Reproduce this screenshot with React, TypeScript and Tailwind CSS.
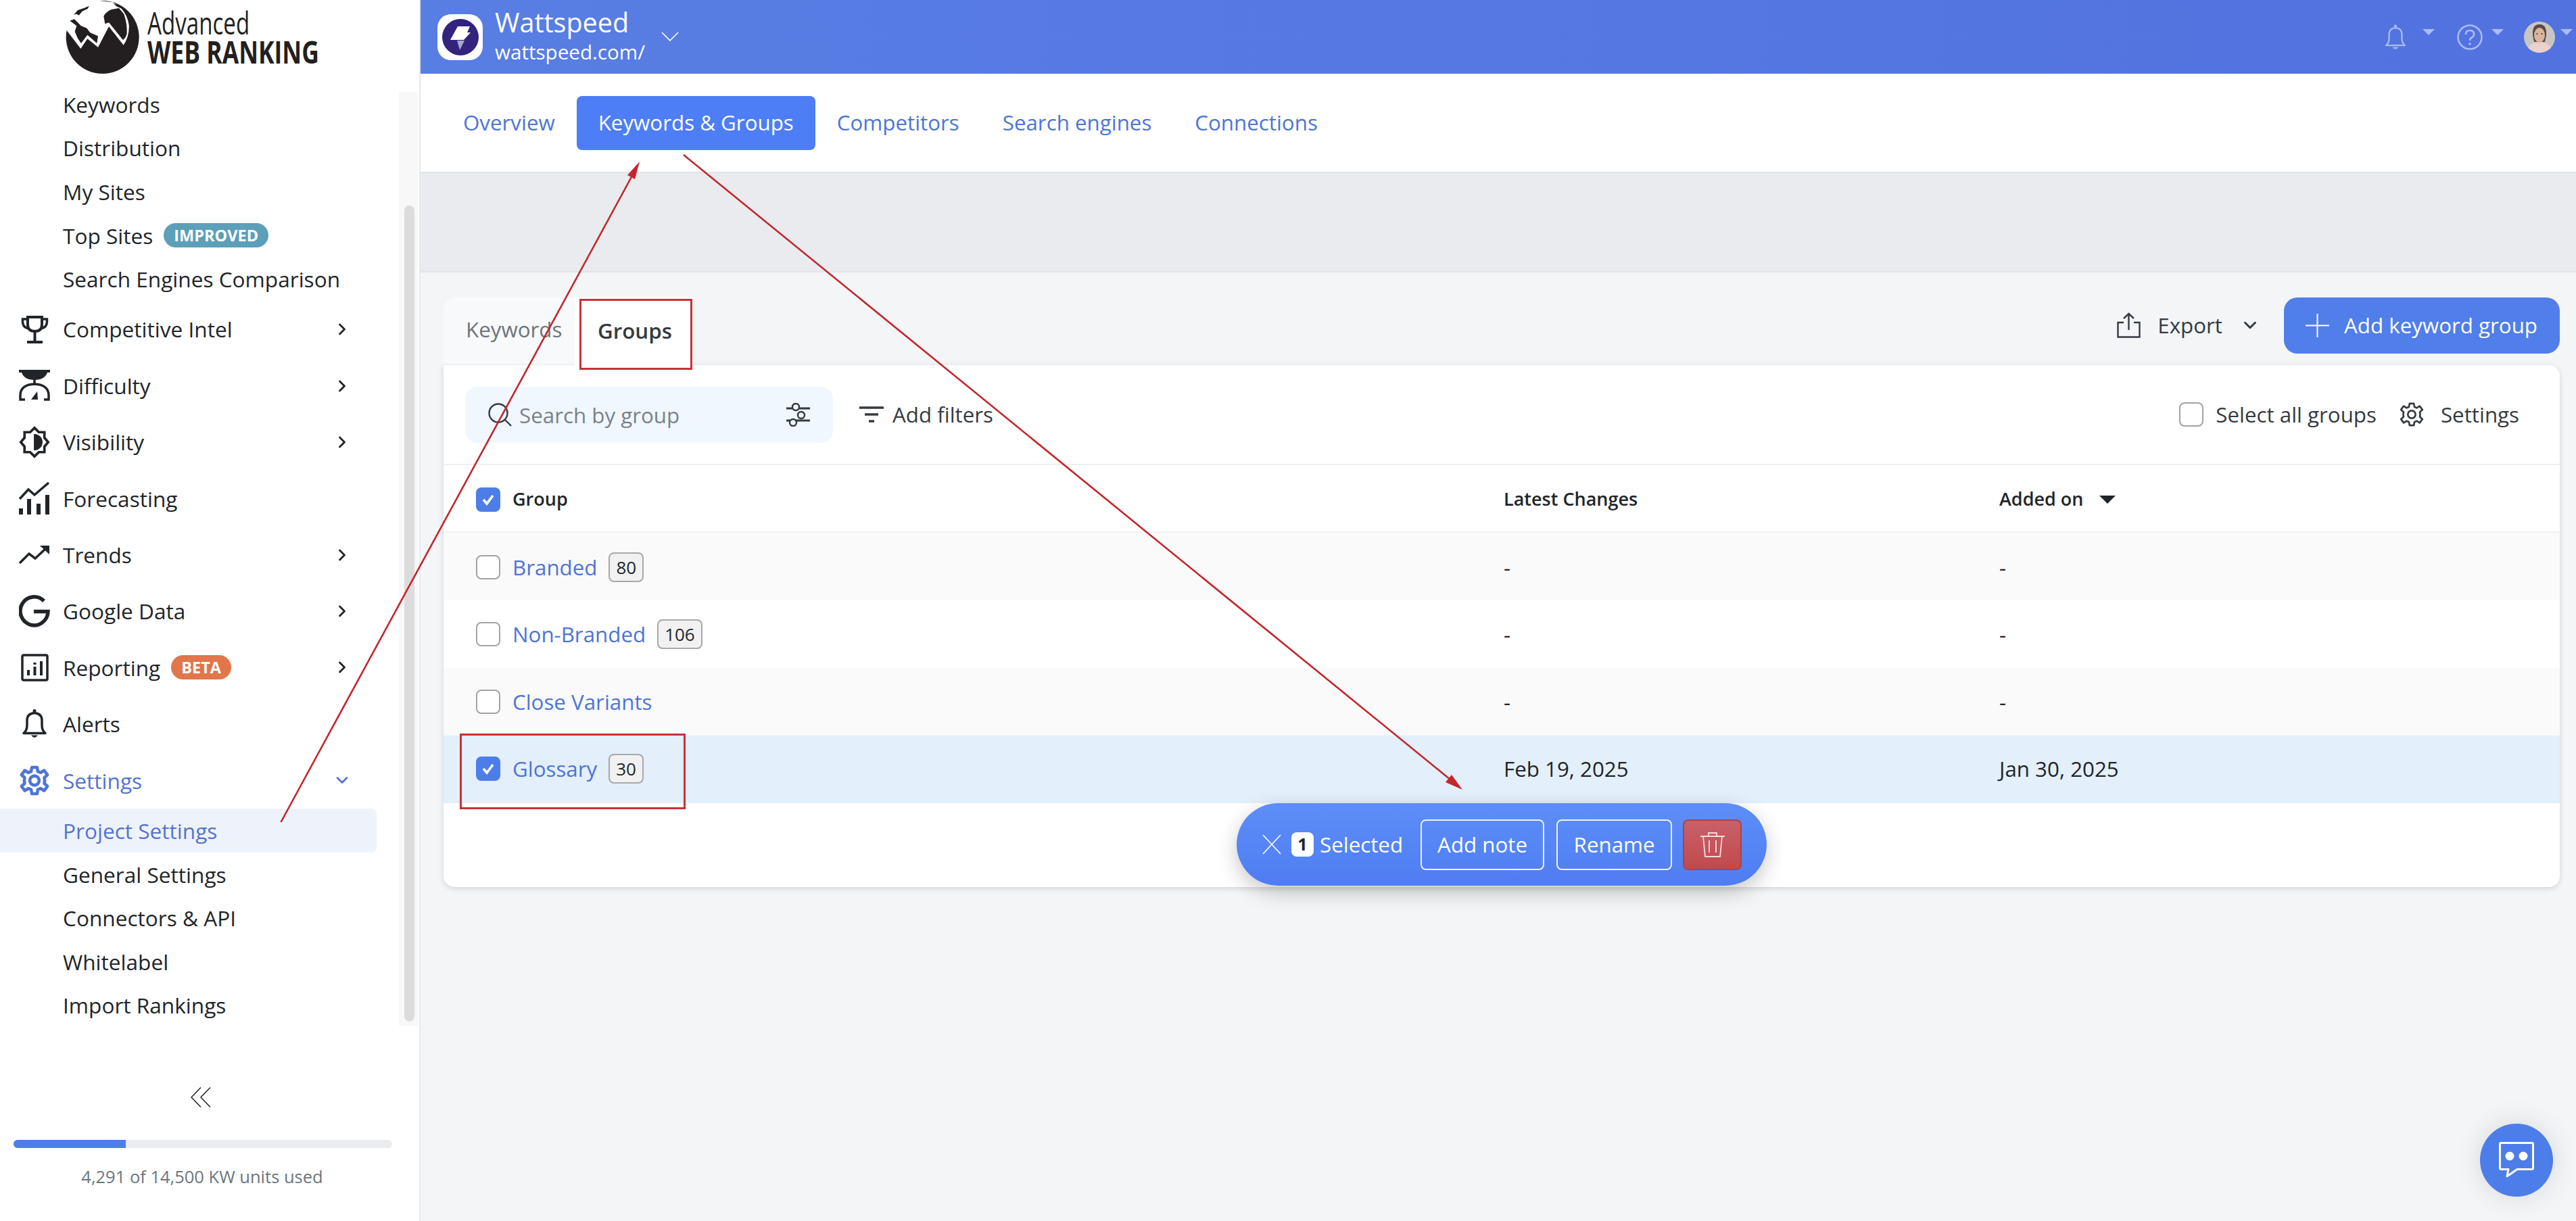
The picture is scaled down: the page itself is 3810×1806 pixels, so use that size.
import { ChevronRight, ChevronDown } from "lucide-react";

const subItems = ["Keywords", "Distribution", "My Sites", "Top Sites", "Search Engines Comparison"];

function Globe() {
  return (
    <svg viewBox="0 0 375 345" className="absolute left-[90px] top-0 h-[115px] w-[125px]">
      <circle cx="185" cy="165" r="162" fill="#231f20" />
      <path d="M10 120 L22 130 L88 216 L118 172 L165 210 L213 118 L278 200 Q305 160 302 110 Q290 40 230 10 L100 -5 L10 20 Z" fill="#fff" />
      <path d="M190 72 Q200 52 225 42 L258 36 L280 62 Q296 110 293 150 Q288 168 276 178 L213 100 L196 106 Z" fill="#231f20" />
      <path d="M232 14 L262 26 L270 38 L246 28 Z" fill="#231f20" />
      <path d="M40 92 L60 85 L75 100 L90 115 L115 125 L130 145 L165 160 L160 192 L118 155 L90 192 L75 170 L62 140 L70 115 Z" fill="#231f20" />
      <path d="M58 65 L75 45 L105 35 L125 26 L120 38 L95 50 L80 68 L70 62 Z" fill="#231f20" />
    </svg>
  );
}

function Trophy() {
  return (
    <svg viewBox="0 0 41 41" className="h-[41px] w-[41px]" fill="none" stroke="#212529" strokeWidth="4">
      <path d="M10 2 H31 V13 Q31 23 20.5 23 Q10 23 10 13 Z" fill="#fff" />
      <path d="M10 5 H2.5 V9 Q2.5 17 11 19 M31 5 H38.5 V9 Q38.5 17 30 19" strokeWidth="3.5" />
      <path d="M20.5 23 V37" />
      <path d="M9 39 H32" />
    </svg>
  );
}

function Scale() {
  return (
    <svg viewBox="0 0 46 47" className="h-[47px] w-[46px]" fill="none" stroke="#212529" strokeWidth="3.5">
      <path d="M0 2 H46" strokeWidth="4" />
      <path d="M4 4 Q8 15 23 15 Q38 15 42 4" fill="#212529" stroke="none" />
      <path d="M23 14 V20" />
      <path d="M9 44 H2 V38 Q2 22 23 21 Q44 22 44 38 V44 H37" />
      <path d="M18 44 L27 32 L28 44 Z" fill="#212529" stroke="none" />
    </svg>
  );
}

function Sun() {
  return (
    <svg viewBox="0 0 50 52" className="h-[52px] w-[50px]" fill="none">
      <path d="M25 3 L32 10 H41 V19 L47 26 L41 33 V42 H32 L25 49 L18 42 H9 V33 L3 26 L9 19 V10 H18 Z" stroke="#212529" strokeWidth="4" strokeLinejoin="miter" />
      <path d="M25 13 A13 13 0 0 1 25 39 Z" fill="#212529" />
      <rect x="24" y="13" width="2.5" height="26" fill="#212529" />
    </svg>
  );
}

function Forecast() {
  return (
    <svg viewBox="0 0 46 48" className="h-[48px] w-[46px]" fill="#212529">
      <path d="M1 25 L14 11 L23 19 L44 1" fill="none" stroke="#212529" strokeWidth="3.5" />
      <rect x="0" y="39" width="6" height="9" />
      <rect x="12" y="25" width="6" height="23" />
      <rect x="26" y="32" width="6" height="16" />
      <rect x="39" y="19" width="6" height="29" />
    </svg>
  );
}

function Trend() {
  return (
    <svg viewBox="0 0 46 30" className="h-[30px] w-[46px]" fill="none" stroke="#212529" strokeWidth="3.5">
      <path d="M1 27 L15 13 L24 20 L39 6" />
      <path d="M31 1 H45 V14 Z" fill="#212529" stroke="none" />
    </svg>
  );
}

function GoogleG() {
  return (
    <svg viewBox="0 0 46 48" className="h-[48px] w-[46px]" fill="none" stroke="#212529" strokeWidth="5.5">
      <path d="M37 9 A20.5 21 0 1 0 43 24.5 H22" />
    </svg>
  );
}

function Report() {
  return (
    <svg viewBox="0 0 41 41" className="h-[41px] w-[41px]" fill="#212529">
      <rect x="2" y="2" width="37" height="37" rx="2" fill="none" stroke="#212529" strokeWidth="3.5" />
      <rect x="9" y="24" width="4" height="8" />
      <rect x="18.5" y="19" width="4" height="13" />
      <rect x="28" y="11" width="4" height="21" />
      <rect x="18.5" y="13" width="4" height="3" />
    </svg>
  );
}

function Bell({ color, w, h, sw }: { color: string; w: string; h: string; sw: string }) {
  return (
    <svg viewBox="0 0 36 44" className={`${w} ${h}`} fill="none" stroke={color} strokeWidth={sw}>
      <path d="M2 36 H34 Q29 32 29 24 V17 Q29 7 18 6 Q7 7 7 17 V24 Q7 32 2 36 Z" strokeLinejoin="round" />
      <circle cx="18" cy="3" r="2.5" fill={color} stroke="none" />
      <path d="M13 39 Q18 46 23 39 Z" fill={color} stroke="none" />
    </svg>
  );
}

function Gear({ color, cls, sw }: { color: string; cls: string; sw: string }) {
  return (
    <svg viewBox="0 0 24 24" className={cls} fill="none" stroke={color} strokeWidth={sw} strokeLinejoin="round">
      <path d="M10 1.8 H14 L14.6 5 L16.8 5.9 L19.5 4.2 L22 7.6 L19.6 9.8 L19.9 12 L19.6 14.2 L22 16.4 L19.5 19.8 L16.8 18.1 L14.6 19 L14 22.2 H10 L9.4 19 L7.2 18.1 L4.5 19.8 L2 16.4 L4.4 14.2 L4.1 12 L4.4 9.8 L2 7.6 L4.5 4.2 L7.2 5.9 L9.4 5 Z" />
      <circle cx="12" cy="12" r="3.6" />
    </svg>
  );
}

function NavRow({ icon, label, chevron, active, badge }: { icon: React.ReactNode; label: string; chevron?: boolean; active?: boolean; badge?: React.ReactNode }) {
  return (
    <div className={`flex h-[83.4px] items-center ${active ? "text-[#5473d0]" : "text-[#212529]"}`}>
      <div className="w-[93px] shrink-0 pl-[28px]">
        <div className="flex w-[46px] justify-center">{icon}</div>
      </div>
      <span>{label}</span>
      {badge}
      {chevron &&
        (active ? (
          <ChevronDown className="ml-auto mr-[70px] h-[28px] w-[28px]" strokeWidth={2.4} />
        ) : (
          <ChevronRight className="ml-auto mr-[70px] h-[28px] w-[28px]" strokeWidth={2.4} />
        ))}
    </div>
  );
}

function Sidebar() {
  return (
    <aside className="flex h-full w-[622px] shrink-0 flex-col border-r-2 border-[#e6e8ec] bg-white text-[31.6px]">
      <div className="relative h-[136px] shrink-0 overflow-hidden">
        <Globe />
        <div className="absolute left-[218px] top-[12px] origin-left scale-x-[0.72] text-[46px] leading-[42px] text-[#231f20]">Advanced</div>
        <div className="absolute left-[218px] top-[55px] origin-left scale-x-[0.755] whitespace-nowrap text-[47px] font-bold leading-[42px] text-[#231f20]">WEB RANKING</div>
      </div>

      <div className="flex h-[1382px] shrink-0">
        <div className="w-[590px] shrink-0">
          {subItems.map((s, i) => (
            <div key={s} className={i === 0 ? "flex h-[50.7px] items-start pl-[93px] leading-[38px] text-[#212529]" : "flex h-[64.7px] items-center pl-[93px] text-[#212529]"}>
              {s}
              {s === "Top Sites" && (
                <span className="ml-[16px] rounded-[18px] bg-[#5c9fb9] px-[15px] text-[23.5px] font-bold leading-[36px] text-white">IMPROVED</span>
              )}
            </div>
          ))}
          <NavRow icon={<Trophy />} label="Competitive Intel" chevron />
          <NavRow icon={<Scale />} label="Difficulty" chevron />
          <NavRow icon={<Sun />} label="Visibility" chevron />
          <NavRow icon={<Forecast />} label="Forecasting" />
          <NavRow icon={<Trend />} label="Trends" chevron />
          <NavRow icon={<GoogleG />} label="Google Data" chevron />
          <NavRow
            icon={<Report />}
            label="Reporting"
            chevron
            badge={<span className="ml-[16px] rounded-[18px] bg-[#e0764a] px-[15px] text-[23.5px] font-bold leading-[36px] text-white">BETA</span>}
          />
          <NavRow icon={<Bell color="#212529" w="w-[36px]" h="h-[45px]" sw="3.5" />} label="Alerts" />
          <NavRow icon={<Gear color="#4f74d6" cls="h-[47px] w-[47px]" sw="2.4" />} label="Settings" chevron active />
          <div className="flex h-[65px] w-[557px] items-center rounded-r-[8px] bg-[#eef3fb] pl-[93px] text-[#5473d0]">Project Settings</div>
          {["General Settings", "Connectors & API", "Whitelabel", "Import Rankings"].map((s) => (
            <div key={s} className="flex h-[64.5px] items-center pl-[93px] text-[#212529]">
              {s}
            </div>
          ))}
        </div>
        <div className="w-[28px] bg-[#f8f8f8] pl-[8px] pt-[168px]">
          <div className="h-[1207px] w-[15px] rounded-full bg-[#dcdcdc]" />
        </div>
      </div>

      <div className="flex h-[288px] flex-col">
        <div className="flex justify-center pr-[26px] pt-[90px]">
          <svg viewBox="0 0 30 30" className="h-[30px] w-[30px]" fill="none" stroke="#212529" strokeWidth="1.5">
            <path d="M15 0.5 L1 15 L15 29.5 M29 0.5 L15 15 L29 29.5" />
          </svg>
        </div>
        <div className="ml-[20px] mt-[48px] h-[12px] w-[560px] overflow-hidden rounded-full bg-[#e9ebef]">
          <div className="h-full w-[166px] bg-[#4d7de8]" />
        </div>
        <div className="mt-[25px] pr-[22px] text-center text-[25.5px] leading-[34px] text-[#6c757d]">4,291 of 14,500 KW units used</div>
      </div>
    </aside>
  );
}

function Caret({ cls }: { cls: string }) {
  return <div className={`h-0 w-0 border-x-[9px] border-t-[9px] border-x-transparent border-t-[#a9bcf5] ${cls}`} />;
}

function Header() {
  return (
    <header className="flex h-[109px] shrink-0 items-center bg-gradient-to-r from-[#587ee3] to-[#5272df] pl-[25px] text-white">
      <div className="flex h-[68px] w-[67px] items-center justify-center rounded-[20px] bg-white">
        <svg viewBox="0 0 56 56" className="h-[56px] w-[56px]">
          <circle cx="28" cy="28" r="27" fill="#33237f" />
          <path d="M24 12 H42 L38 21 H43 L33 32 H13 Z" fill="#fff" />
          <path d="M23 33 H34 L27 47 Z" fill="#a9a6cf" />
        </svg>
      </div>
      <div className="ml-[18px] flex flex-col">
        <span className="text-[39.5px] leading-[44px]">Wattspeed</span>
        <span className="text-[29.6px] leading-[44px]">wattspeed.com/</span>
      </div>
      <svg viewBox="0 0 26 14" className="ml-[24px] mt-[-2px] h-[14px] w-[26px]" fill="none" stroke="#fff" strokeWidth="1.6">
        <path d="M1 1 L13 13 L25 1" />
      </svg>
      <div className="ml-auto flex items-center">
        <Bell color="#a9bcf5" w="w-[32px]" h="h-[38px]" sw="2.6" />
        <Caret cls="ml-[24px] mb-[14px]" />
        <svg viewBox="0 0 38 38" className="ml-[33px] h-[38px] w-[38px]" fill="none" stroke="#a9bcf5" strokeWidth="2.6">
          <circle cx="19" cy="19" r="17.5" />
          <path d="M13 15 Q13 9 19 9 Q25 9 25 14.5 Q25 18 21 20 Q19 21 19 24" />
          <circle cx="19" cy="29" r="1.8" fill="#a9bcf5" stroke="none" />
        </svg>
        <Caret cls="ml-[13px] mb-[14px]" />
        <svg viewBox="0 0 46 46" className="ml-[30px] h-[46px] w-[46px]">
          <clipPath id="av">
            <circle cx="23" cy="23" r="23" />
          </clipPath>
          <g clipPath="url(#av)">
            <rect width="46" height="46" fill="#c9c6c2" />
            <path d="M13 20 Q12 4 23 4 Q34 4 33 20 L31 30 H15 Z" fill="#5b4a42" />
            <ellipse cx="23" cy="20" rx="8" ry="11" fill="#dbb49c" />
            <path d="M4 46 Q6 33 18 31 H28 Q40 33 42 46 Z" fill="#ecd0cc" />
            <circle cx="19.5" cy="18" r="1" fill="#3a2a25" />
            <circle cx="26.5" cy="18" r="1" fill="#3a2a25" />
          </g>
        </svg>
        <Caret cls="ml-[8px] mr-[5px] mb-[14px]" />
      </div>
    </header>
  );
}

function Box({ checked }: { checked?: boolean }) {
  return checked ? (
    <div className="flex h-[36px] w-[36px] shrink-0 items-center justify-center rounded-[8px] bg-[#4d7de8]">
      <svg viewBox="0 0 24 24" className="h-[24px] w-[24px]" fill="none" stroke="#fff" strokeWidth="3.6">
        <path d="M5 12 L10 18 L19 6" />
      </svg>
    </div>
  ) : (
    <div className="h-[36px] w-[36px] shrink-0 rounded-[8px] border-2 border-[#a3a3a3] bg-white" />
  );
}

function Count({ n }: { n: string }) {
  return <span className="ml-[17px] rounded-[8px] border-2 border-[#a8a8a8] bg-[#f1f1f1] px-[9px] text-[26px] leading-[40px] text-[#212529]">{n}</span>;
}

const rows = [
  { name: "Branded", count: "80", bg: "bg-[#fafafa] pt-[2px]", latest: "-", added: "-" },
  { name: "Non-Branded", count: "106", bg: "bg-white", latest: "-", added: "-" },
  { name: "Close Variants", count: "", bg: "bg-[#fafafa]", latest: "-", added: "-" },
  { name: "Glossary", count: "30", bg: "bg-[#e3effb] pb-[2px]", latest: "Feb 19, 2025", added: "Jan 30, 2025", checked: true },
];

function GroupsCard() {
  return (
    <div className="h-[772px] rounded-b-[16px] rounded-tr-[16px] bg-white shadow-[0_2px_8px_rgba(0,0,0,0.14)]">
      <div className="flex h-[148px] items-center border-b-2 border-[#eef0f2] pl-[32px] pr-[60px]">
        <div className="flex h-[83px] w-[544px] items-center rounded-[18px] bg-[#f0f7fe] px-[34px]">
          <svg viewBox="0 0 35 35" className="h-[35px] w-[35px] shrink-0" fill="none" stroke="#343a40" strokeWidth="2.4">
            <circle cx="15" cy="15" r="13.5" />
            <path d="M25 25 L34 34" />
          </svg>
          <span className="ml-[11px] pt-[2px] text-[#7a8288]">Search by group</span>
          <svg viewBox="0 0 35 35" className="ml-auto h-[35px] w-[35px]" fill="none" stroke="#343a40" strokeWidth="3">
            <path d="M0 8 H35 M0 26 H35" />
            <circle cx="14" cy="6" r="5" fill="#f0f7fe" strokeWidth="2.4" />
            <circle cx="22" cy="18" r="5" fill="#f0f7fe" strokeWidth="2.4" />
            <circle cx="10" cy="29" r="5" fill="#f0f7fe" strokeWidth="2.4" />
          </svg>
        </div>
        <svg viewBox="0 0 36 24" className="ml-[39px] h-[24px] w-[36px]" fill="none" stroke="#343a40" strokeWidth="3.4">
          <path d="M0 2 H36 M8 12 H28 M14 22 H22" />
        </svg>
        <span className="ml-[13px] text-[#343a40]">Add filters</span>
        <div className="ml-auto flex items-center text-[#343a40]">
          <Box />
          <span className="ml-[18px]">Select all groups</span>
          <Gear color="#343a40" cls="ml-[33px] h-[38px] w-[38px]" sw="1.7" />
          <span className="ml-[24px]">Settings</span>
        </div>
      </div>

      <div className="grid h-[100px] grid-cols-[1568px_733px_1fr] items-center border-b-2 border-[#f0f1f3] pt-[3px] text-[27px] font-semibold text-[#212529]">
        <div className="flex items-center pl-[48px]">
          <Box checked />
          <span className="ml-[18px]">Group</span>
        </div>
        <div>Latest Changes</div>
        <div className="flex items-center">
          Added on
          <div className="ml-[24px] h-0 w-0 border-x-[12px] border-t-[12px] border-x-transparent border-t-[#212529]" />
        </div>
      </div>

      {rows.map((r) => (
        <div key={r.name} className={`grid h-[100px] grid-cols-[1568px_733px_1fr] items-center text-[#212529] ${r.bg}`}>
          <div className="flex items-center pl-[48px]">
            <Box checked={r.checked} />
            <span className="ml-[18px] text-[#4f74d6]">{r.name}</span>
            {r.count && <Count n={r.count} />}
          </div>
          <div>{r.latest}</div>
          <div>{r.added}</div>
        </div>
      ))}
    </div>
  );
}

function BulkBar() {
  return (
    <div className="absolute left-[1829px] top-[1188px] flex h-[122px] w-[784px] items-center rounded-full bg-gradient-to-b from-[#5d8ef8] to-[#4f7df2] pl-[38px] text-white shadow-[0_10px_30px_rgba(0,0,0,0.22)]">
      <svg viewBox="0 0 28 30" className="h-[30px] w-[28px]" fill="none" stroke="#fff" strokeWidth="1.6">
        <path d="M1 1 L27 29 M27 1 L1 29" />
      </svg>
      <span className="ml-[15px] flex h-[36px] w-[33px] items-center justify-center rounded-[8px] bg-white text-[25px] font-bold text-[#212529]">1</span>
      <span className="ml-[9px]">Selected</span>
      <div className="ml-[26px] flex h-[75px] w-[183px] items-center justify-center rounded-[8px] border-2 border-white/90">Add note</div>
      <div className="ml-[18px] flex h-[75px] w-[171px] items-center justify-center rounded-[8px] border-2 border-white/90">Rename</div>
      <div className="ml-[16px] flex h-[75px] w-[87px] items-center justify-center rounded-[8px] border-2 border-[#a8434f] bg-gradient-to-b from-[#c9606a] to-[#c04a4c]">
        <svg viewBox="0 0 38 38" className="h-[38px] w-[38px]" fill="none" stroke="#f6dcdc" strokeWidth="1.8">
          <path d="M1 7 H37 M13 7 V2 H25 V7 M5 7 L8 37 H30 L33 7 M14 13 V31 M24 13 V31" />
        </svg>
      </div>
    </div>
  );
}

function Annotations() {
  return (
    <>
      <svg viewBox="0 0 3810 1806" className="pointer-events-none absolute inset-0 h-full w-full">
        <line x1="415.5" y1="1216" x2="936" y2="258" stroke="#c1272d" strokeWidth="2.6" />
        <polygon points="946,239 939,265 928,259" fill="#c1272d" />
        <line x1="1011" y1="229" x2="2145" y2="1153" stroke="#c1272d" strokeWidth="2.6" />
        <polygon points="2163,1168 2138,1157 2147,1146" fill="#c1272d" />
      </svg>
      <div className="pointer-events-none absolute left-[857px] top-[442px] h-[105px] w-[167px] border-[3px] border-[#c8303a]" />
      <div className="pointer-events-none absolute left-[680px] top-[1085px] h-[112px] w-[334px] border-[3px] border-[#c8303a]" />
    </>
  );
}

export default function App() {
  return (
    <div className="relative flex h-[1806px] w-[3810px] overflow-hidden bg-[#f3f5f7] font-['Open_Sans',sans-serif] text-[31.3px]">
      <Sidebar />
      <main className="flex min-w-0 flex-1 flex-col">
        <Header />
        <nav className="flex h-[147px] shrink-0 items-center border-b-2 border-[#e2e4e8] bg-white pl-[31px] text-[#4f74d6]">
          <div className="flex h-[80px] items-center px-[32px]">Overview</div>
          <div className="flex h-[80px] items-center rounded-[8px] bg-[#4d7ef5] px-[32px] text-white">Keywords &amp; Groups</div>
          <div className="flex h-[80px] items-center px-[32px]">Competitors</div>
          <div className="flex h-[80px] items-center px-[32px]">Search engines</div>
          <div className="flex h-[80px] items-center px-[32px]">Connections</div>
        </nav>
        <div className="h-[147px] shrink-0 border-b-2 border-[#e2e4e8] bg-[#e9ebef]" />
        <div className="flex-1 pl-[34px] pr-[24px] pt-[36px]">
          <div className="flex h-[101px] justify-between">
            <div className="flex">
              <div className="flex w-[194px] items-center rounded-tl-[20px] border-b-2 border-[#eef0f2] bg-[#f8f9fa] pb-[2px] pl-[33px] text-[#6c757d]">Keywords</div>
              <div className="flex w-[175px] items-center bg-white pl-[34px] font-semibold text-[#343a40]">Groups</div>
            </div>
            <div className="flex h-[84px] items-center text-[#343a40]">
              <svg viewBox="0 0 35 38" className="h-[38px] w-[35px]" fill="none" stroke="#343a40" strokeWidth="2.4">
                <path d="M10 15 H1.5 V36.5 H33.5 V15 H25 M17.5 26 V2 M10 9 L17.5 2 L25 9" />
              </svg>
              <span className="ml-[25px]">Export</span>
              <ChevronDown className="ml-[26px] h-[30px] w-[30px]" strokeWidth={2.4} />
              <div className="ml-[35px] flex h-[83px] w-[408px] items-center rounded-[20px] bg-[#507eea] pl-[32px] font-medium text-white">
                <svg viewBox="0 0 35 35" className="h-[35px] w-[35px]" fill="none" stroke="#fff" strokeWidth="2">
                  <path d="M17.5 0 V35 M0 17.5 H35" />
                </svg>
                <span className="ml-[22px]">Add keyword group</span>
              </div>
            </div>
          </div>
          <GroupsCard />
        </div>
      </main>
      <BulkBar />
      <div className="absolute left-[3668px] top-[1662px] flex h-[108px] w-[108px] items-center justify-center rounded-full bg-[#4d7de8] shadow-[0_0_40px_rgba(0,0,0,0.12)]">
        <svg viewBox="0 0 52 54" className="h-[54px] w-[52px]" fill="none" stroke="#fff" strokeWidth="3">
          <path d="M3 1.5 H49 Q50.5 1.5 50.5 3 V39 Q50.5 40.5 49 40.5 H27 L12 51 L14 40.5 H3 Q1.5 40.5 1.5 39 V3 Q1.5 1.5 3 1.5 Z" strokeLinejoin="round" />
          <circle cx="16" cy="21" r="6.5" fill="#fff" stroke="none" />
          <circle cx="36" cy="21" r="6.5" fill="#fff" stroke="none" />
        </svg>
      </div>
      <Annotations />
    </div>
  );
}
